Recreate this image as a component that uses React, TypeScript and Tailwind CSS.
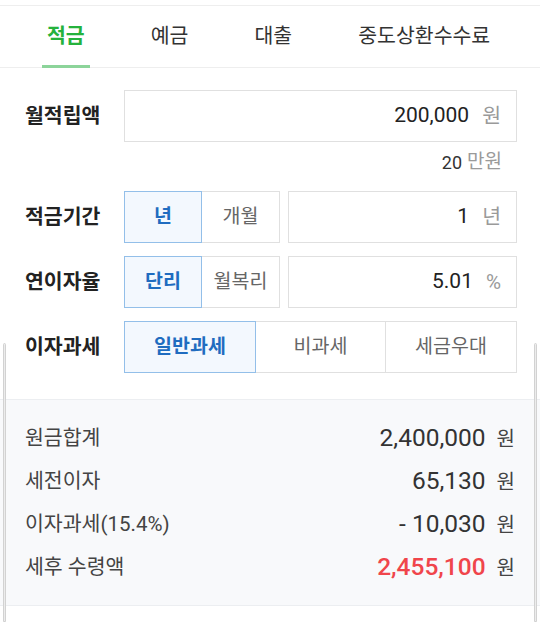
import { ReactNode } from 'react';

const FONT = 'font-[Roboto,"Noto_Sans_CJK_KR",sans-serif]';

const TABS = ['적금', '예금', '대출', '중도상환수수료'];

function Segment({ label, active, className = '' }: { label: string; active?: boolean; className?: string }) {
  return (
    <div
      className={`flex h-[52px] items-center justify-center border text-[19.5px] ${
        active
          ? 'relative z-10 border-[#93bfe9] bg-[#f3f8fe] font-bold text-[#1f6cc0]'
          : 'border-[#e0e0e0] bg-white text-[#666]'
      } ${className}`}
    >
      {label}
    </div>
  );
}

function ValueBox({ value, unit, className = '' }: { value: string; unit: string; className?: string }) {
  return (
    <div
      className={`flex h-[52px] items-center justify-end gap-[13px] border border-[#e0e0e0] bg-white pr-[15px] ${className}`}
    >
      <span className="text-[21px] text-[#222]">{value}</span>
      <span className="text-[20.5px] text-[#9a9a9a]">{unit}</span>
    </div>
  );
}

function FormRow({ label, children }: { label: string; children: ReactNode }) {
  return (
    <div className="flex items-center">
      <span className="w-[99px] shrink-0 text-[20.5px] font-bold text-[#222]">{label}</span>
      <div className="flex flex-1">{children}</div>
    </div>
  );
}

function ResultRow({ label, value, strong }: { label: string; value: string; strong?: boolean }) {
  return (
    <div className="flex h-[43px] items-center justify-between">
      <span className="text-[20.5px] text-[#444]">{label}</span>
      <span className="flex items-center gap-[11px]">
        <span className={`text-[24.5px] ${strong ? 'font-medium text-[#f0454b]' : 'text-[#333]'}`}>{value}</span>
        <span className="text-[20px] text-[#444]">원</span>
      </span>
    </div>
  );
}

export default function App() {
  return (
    <div className={`relative h-[622px] w-[540px] overflow-hidden bg-white ${FONT}`}>
      <div className="mt-[5px] flex h-[63px] gap-[56px] border-y border-[#eeeeee] px-[42px]">
        {TABS.map((tab, i) => (
          <div
            key={tab}
            className={`relative flex items-center px-[5px] text-[20.5px] ${
              i === 0 ? 'font-bold text-[#25b23c]' : 'text-[#333]'
            }`}
          >
            {tab}
            {i === 0 && <span className="absolute inset-x-0 bottom-[-1px] h-[3px] bg-[#8cd49a]" />}
          </div>
        ))}
      </div>

      <div className="flex flex-col pl-[25px] pr-[23px] pt-[22px]">
        <FormRow label="월적립액">
          <ValueBox value="200,000" unit="원" className="h-[50px] flex-1" />
        </FormRow>
        <div className="mb-[9px] flex h-[40px] items-center justify-end gap-[5px] pr-[15px]">
          <span className="text-[18px] text-[#333]">20</span>
          <span className="text-[19px] text-[#9a9a9a]">만원</span>
        </div>
        <div className="flex flex-col gap-[13px]">
          <FormRow label="적금기간">
            <Segment label="년" active className="w-[78px]" />
            <Segment label="개월" className="-ml-px w-[79px]" />
            <ValueBox value="1" unit="년" className="ml-[8px] flex-1" />
          </FormRow>
          <FormRow label="연이자율">
            <Segment label="단리" active className="w-[78px]" />
            <Segment label="월복리" className="-ml-px w-[79px]" />
            <ValueBox value="5.01" unit="%" className="ml-[8px] flex-1" />
          </FormRow>
          <FormRow label="이자과세">
            <Segment label="일반과세" active className="w-[132px]" />
            <Segment label="비과세" className="-ml-px w-[131px]" />
            <Segment label="세금우대" className="-ml-px flex-1" />
          </FormRow>
        </div>
      </div>

      <div className="mt-[26px] border-y border-[#eceef1] bg-[#f8f9fb] px-[25px] pb-[16px] pt-[17px]">
        <ResultRow label="원금합계" value="2,400,000" />
        <ResultRow label="세전이자" value="65,130" />
        <ResultRow label="이자과세(15.4%)" value="- 10,030" />
        <ResultRow label="세후 수령액" value="2,455,100" strong />
      </div>

      <span className="absolute bottom-0 left-[3px] top-[343px] w-[3px] rounded-t-full border border-[#d2d2d2] bg-[#ececec]" />
      <span className="absolute bottom-0 right-[3px] top-[343px] w-[3px] rounded-t-full border border-[#d2d2d2] bg-[#ececec]" />
    </div>
  );
}
